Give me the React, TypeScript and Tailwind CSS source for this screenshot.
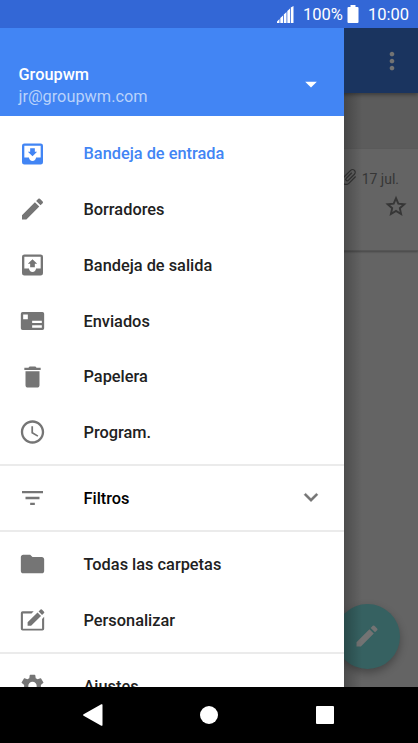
import React from 'react';
import { MdAccessTime, MdArrowDropDown, MdAttachFile, MdCreate, MdDelete, MdFilterList, MdFolder, MdMoreVert, MdSettings } from 'react-icons/md';

interface MenuRowProps {
    icon: React.ReactNode;
    label: string;
    active?: boolean;
    className?: string;
    trailing?: React.ReactNode;
}

const InboxIcon = () => (
    <svg viewBox="0 0 24 24" className="w-7 h-7" fill="currentColor">
        <path d="M19 3H5a2 2 0 0 0-2 2v14a2 2 0 0 0 2 2h14a2 2 0 0 0 2-2V5a2 2 0 0 0-2-2zm0 12h-4c0 1.66-1.35 3-3 3s-3-1.34-3-3H5V5h14v10zm-3-5h-2V7h-4v3H8l4 4 4-4z" />
    </svg>
);

const OutboxIcon = () => (
    <svg viewBox="0 0 24 24" className="w-7 h-7" fill="currentColor">
        <path d="M19 3H5a2 2 0 0 0-2 2v14a2 2 0 0 0 2 2h14a2 2 0 0 0 2-2V5a2 2 0 0 0-2-2zm0 12h-4c0 1.66-1.35 3-3 3s-3-1.34-3-3H5V5h14v10zM8 11h2v3h4v-3h2l-4-4-4 4z" />
    </svg>
);

const SentIcon = () => (
    <svg viewBox="0 0 24 24" className="w-7 h-7" fill="currentColor" fillRule="evenodd">
        <path d="M3.5 4.2h17A1.5 1.5 0 0 1 22 5.7v12.6a1.5 1.5 0 0 1-1.5 1.5h-17A1.5 1.5 0 0 1 2 18.3V5.7a1.5 1.5 0 0 1 1.5-1.5zM4 6.500v4h4v-4zM11.700 11.700v2h8.300v-2zM11.700 15.700v2h8.300v-2z" />
    </svg>
);

const CustomizeIcon = () => (
    <svg viewBox="0 0 24 24" className="w-7 h-7" fill="currentColor">
        <path d="M13 4.600H3.500A1.500 1.500 0 0 0 2 6.100v13.500a1.500 1.500 0 0 0 1.500 1.500h17a1.500 1.500 0 0 0 1.500-1.500V9.300l-1.800 1.800v8.300H3.800V6.400h7.400z" />
        <path d="M7.800 14V17h3l8.500-8.500-3-3zM21.900 6a.8.8 0 0 0 0-1.100L20 3a.8.8 0 0 0-1.100 0l-1.700 1.700 3 3z" />
    </svg>
);

const StarIcon = () => (
    <svg viewBox="0 0 24 24" className="w-6 h-6" fill="none" stroke="currentColor" strokeWidth="1.900">
        <path d="M12 4.200l2.300 5.500 6 .5-4.500 4 1.300 5.800-5.100-3.100-5.100 3.100 1.300-5.800-4.500-4 6-.5z" />
    </svg>
);

const MenuRow = ({ icon, label, active, className = 'text-[#212121]', trailing }: MenuRowProps) => (
    <div className={`flex items-center h-[55.75px] shrink-0 pl-[18px] pr-[19px] ${active ? 'text-[#4285f4]' : className}`}>
        <span className={`w-7 mr-[37.500px] translate-x-[0.5px] ${active ? '' : 'text-[#757575]'}`}>{icon}</span>
        <span className="flex-1 pt-[2px] text-[16.350px] font-medium">{label}</span>
        {trailing}
    </div>
);

const Divider = () => <div className="h-[2px] shrink-0 bg-[#ebebeb]" />;

const StatusBar = () => (
    <div className="relative z-20 h-7 shrink-0 flex items-center justify-end pr-[9px] bg-[#3367d6] text-white text-[16.500px]">
        <svg width="17" height="17" viewBox="0 0 17 17" className="mr-[9px]" fill="currentColor">
            <path d="M0 17v-1.500L2.500 13v4zM3.300 17v-5L6 9.500V17zM6.800 17V8.500L9.500 6v11zM10.300 17V5L13 2.500V17zM13.800 17V1.500L16.500 0v17z" />
        </svg>
        <span className="mt-[2px]">100%</span>
        <svg width="12" height="18" viewBox="0 0 12 18" className="ml-[4px] mr-[9px]" fill="currentColor">
            <path d="M3.500 0h5v2H10.500a1 1 0 0 1 1 1v14a1 1 0 0 1-1 1H1.500a1 1 0 0 1-1-1V3a1 1 0 0 1 1-1h2z" />
        </svg>
        <span className="mt-[2px]">10:00</span>
    </div>
);

/* Mail list sitting dimmed behind the drawer */
const MailList = () => (
    <div className="flex-1 flex flex-col bg-[#646464] text-[#363636]">
        <div className="h-[65px] shrink-0 flex items-center justify-end pr-[12px] bg-[#1a345f] text-[#737373] shadow-[0_2px_4px_rgba(0,0,0,0.35)] z-[1]">
            <MdMoreVert size={28} />
        </div>
        <div className="h-[56px] shrink-0 bg-[#5c5c5c]" />
        <div className="h-[102px] shrink-0 pt-[16px] bg-[#646464] border-b border-[#555] shadow-[0_1px_2px_rgba(0,0,0,0.3)]">
            <div className="flex items-center justify-end h-7 pr-[19px] text-[14px]">
                <MdAttachFile size={20} className="rotate-45 mr-[3px] -mt-[4px]" />
                <span>17 jul.</span>
            </div>
            <div className="flex justify-end pr-[10px] pt-px">
                <StarIcon />
            </div>
        </div>
    </div>
);

const Drawer = () => (
    <div className="absolute left-0 top-7 bottom-[56px] z-10 w-[343.500px] flex flex-col overflow-hidden bg-white">
        <div className="h-[88px] shrink-0 flex items-center pl-[18.500px] pr-[19px] bg-[#4285f4] text-white text-[16.320px]">
            <div className="flex-1 pt-[28px] leading-[22px]">
                <div className="font-medium">Groupwm</div>
                <div className="text-[#b9d2fb]">jr@groupwm.com</div>
            </div>
            <MdArrowDropDown size={28} className="mt-[23px]" />
        </div>
        <div className="pt-[9.750px] pb-[3.750px]">
            <MenuRow icon={<InboxIcon />} label="Bandeja de entrada" active />
            <MenuRow icon={<MdCreate size={28} />} label="Borradores" />
            <MenuRow icon={<OutboxIcon />} label="Bandeja de salida" />
            <MenuRow icon={<SentIcon />} label="Enviados" />
            <MenuRow icon={<MdDelete size={28} />} label="Papelera" />
            <MenuRow icon={<MdAccessTime size={28} />} label="Program." />
        </div>
        <Divider />
        <div className="py-[4.250px]">
            <MenuRow
                icon={<MdFilterList size={28} />}
                label="Filtros"
                className="text-black"
                trailing={
                    <svg viewBox="0 0 24 24" className="w-7 h-7 text-[#757575]" fill="currentColor">
                        <path d="M7.410 7.840 12 12.420l4.590-4.580L18 9.250l-6 6-6-6z" stroke="currentColor" strokeWidth="0.300" />
                    </svg>
                }
            />
        </div>
        <Divider />
        <div className="py-[4.250px]">
            <MenuRow icon={<MdFolder size={28} />} label="Todas las carpetas" />
            <MenuRow icon={<CustomizeIcon />} label="Personalizar" />
        </div>
        <Divider />
        <div className="py-[4.250px]">
            <MenuRow icon={<MdSettings size={28} />} label="Ajustes" />
        </div>
    </div>
);

const NavBar = () => (
    <div className="relative z-20 h-[56px] shrink-0 flex items-center bg-black text-white">
        <svg width="20" height="22" viewBox="0 0 20 22" className="ml-[83px]" fill="currentColor">
            <path d="M18.300.3.600 10.200a.9.9 0 0 0 0 1.600l17.700 9.900a.8.8 0 0 0 1.200-.7V1a.8.8 0 0 0-1.200-.7z" />
        </svg>
        <div className="ml-[97px] w-[18px] h-[18px] rounded-full bg-white" />
        <div className="ml-[98px] w-[18px] h-[18px] rounded-[1px] bg-white" />
    </div>
);

export default function App() {
    return (
        <div className="relative w-[418px] h-[743px] flex flex-col overflow-hidden font-['Roboto',sans-serif]">
            <StatusBar />
            <MailList />
            <div className="absolute left-[334.500px] top-[603.500px] w-[65px] h-[65px] rounded-full flex items-center justify-center bg-[#366161] text-[#737373] shadow-[0_4px_8px_rgba(0,0,0,0.3)]">
                <MdCreate size={28} />
            </div>
            <div className="absolute left-[343px] top-7 bottom-[56px] w-[19px] bg-linear-to-r from-black/25 to-transparent" />
            <Drawer />
            <NavBar />
        </div>
    );
}
